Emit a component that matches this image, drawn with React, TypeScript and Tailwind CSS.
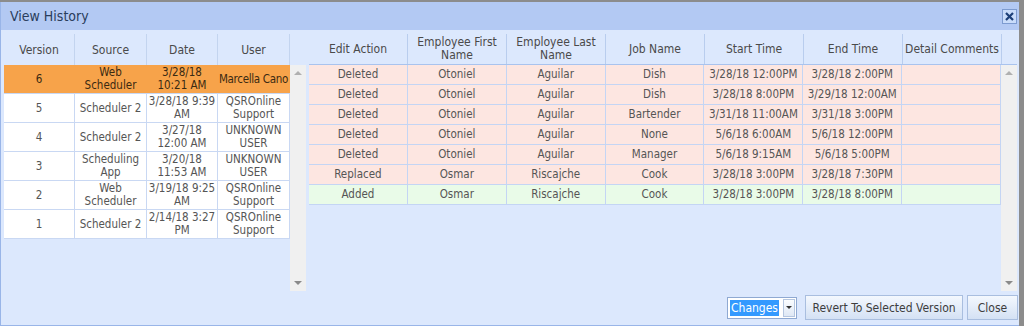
import React from "react";

type Version = {
  version: string;
  source: string;
  date: string;
  user: string;
  selected?: boolean;
};

type Change = {
  action: string;
  first: string;
  last: string;
  job: string;
  start: string;
  end: string;
  comments: string;
  added?: boolean;
};

const versions: Version[] = [
  { version: "6", source: "Web Scheduler", date: "3/28/18 10:21 AM", user: "Marcella Cano", selected: true },
  { version: "5", source: "Scheduler 2", date: "3/28/18 9:39 AM", user: "QSROnline Support" },
  { version: "4", source: "Scheduler 2", date: "3/27/18 12:00 AM", user: "UNKNOWN USER" },
  { version: "3", source: "Scheduling App", date: "3/20/18 11:53 AM", user: "UNKNOWN USER" },
  { version: "2", source: "Web Scheduler", date: "3/19/18 9:25 AM", user: "QSROnline Support" },
  { version: "1", source: "Scheduler 2", date: "2/14/18 3:27 PM", user: "QSROnline Support" },
];

const changes: Change[] = [
  { action: "Deleted", first: "Otoniel", last: "Aguilar", job: "Dish", start: "3/28/18 12:00PM", end: "3/28/18 2:00PM", comments: "" },
  { action: "Deleted", first: "Otoniel", last: "Aguilar", job: "Dish", start: "3/28/18 8:00PM", end: "3/29/18 12:00AM", comments: "" },
  { action: "Deleted", first: "Otoniel", last: "Aguilar", job: "Bartender", start: "3/31/18 11:00AM", end: "3/31/18 3:00PM", comments: "" },
  { action: "Deleted", first: "Otoniel", last: "Aguilar", job: "None", start: "5/6/18 6:00AM", end: "5/6/18 12:00PM", comments: "" },
  { action: "Deleted", first: "Otoniel", last: "Aguilar", job: "Manager", start: "5/6/18 9:15AM", end: "5/6/18 5:00PM", comments: "" },
  { action: "Replaced", first: "Osmar", last: "Riscajche", job: "Cook", start: "3/28/18 3:00PM", end: "3/28/18 7:30PM", comments: "" },
  { action: "Added", first: "Osmar", last: "Riscajche", job: "Cook", start: "3/28/18 3:00PM", end: "3/28/18 8:00PM", comments: "", added: true },
];

const leftHeaders = ["Version", "Source", "Date", "User"];
const rightHeaders = [
  "Edit Action",
  "Employee First Name",
  "Employee Last Name",
  "Job Name",
  "Start Time",
  "End Time",
  "Detail Comments",
];

const font = { fontFamily: "Tahoma, 'DejaVu Sans Condensed', 'Liberation Sans', sans-serif" };

const ScrollBar = ({ height }: { height: string }) => (
  <div className={`w-[16px] ${height} bg-[#f0f0f0] flex flex-col items-center justify-between py-[6px]`}>
    <div className="w-0 h-0 border-l-[4px] border-r-[4px] border-b-[4px] border-l-transparent border-r-transparent border-b-[#b0b0b0]" />
    <div className="w-0 h-0 border-l-[4px] border-r-[4px] border-t-[4px] border-l-transparent border-r-transparent border-t-[#8a8a8a]" />
  </div>
);

const App = () => {
  return (
    <div
      className="w-[1024px] h-[326px] bg-[#8c8c8c] pt-[2px] pr-[5px] overflow-hidden"
      style={font}
    >
      <div className="h-[324px] flex flex-col border-l border-b border-[#99b5e8] bg-[#dce8fd]">
        {/* title bar */}
        <div className="h-[28px] bg-[#b3c9f3] flex items-center justify-between pl-[9px] pr-[2px] shrink-0">
          <span className="text-[14px] text-[#2a3d5c]">View History</span>
          <div className="w-[15px] h-[15px] border border-[#7d9bd0] bg-[#c9dcfa] flex items-center justify-center">
            <svg width="9" height="9" viewBox="0 0 9 9">
              <path d="M1 1 L8 8 M8 1 L1 8" stroke="#1d3f78" strokeWidth="2.2" />
            </svg>
          </div>
        </div>

        {/* main */}
        <div className="flex pl-[3px] pt-[4px] h-[261px] text-[#555555] shrink-0">
          {/* versions */}
          <div className="w-[302px] flex flex-col">
            <div className="flex h-[31px] w-[286px]">
              {leftHeaders.map((h, i) => (
                <div
                  key={h}
                  className={`${i % 2 === 0 ? "w-[71px]" : "w-[72px]"} flex items-center justify-center border-r border-[#c3d4ef] text-[#4a4a4a] text-[12px]`}
                >
                  {h}
                </div>
              ))}
            </div>
            <div className="flex">
              <div className="w-[286px]">
                {versions.map((v) => (
                  <div
                    key={v.version}
                    className={`flex h-[29px] border-b border-[#c9d8f3] ${v.selected ? "bg-[#f7a34a] text-[#3b2a12]" : "bg-white"}`}
                  >
                    {[v.version, v.source, v.date, v.user].map((c, i) => (
                      <div
                        key={i}
                        className={`${i % 2 === 0 ? "w-[71px]" : "w-[72px]"} flex items-center justify-center text-center leading-[13px] border-r ${v.selected ? "border-[#f7a34a]" : "border-[#c9d8f3]"} text-[11.5px] ${v.selected && i === 3 ? "whitespace-nowrap tracking-[-0.3px]" : ""}`}
                      >
                        {c}
                      </div>
                    ))}
                  </div>
                ))}
              </div>
              <ScrollBar height="h-[226px]" />
            </div>
          </div>

          {/* changes */}
          <div className="flex flex-col ml-[3px]">
            <div className="flex h-[31px] border-b border-[#a9c3ee]">
              {rightHeaders.map((h) => (
                <div
                  key={h}
                  className="w-[99px] flex items-center justify-center text-center leading-[13px] border-r border-[#b9cdee] text-[#4a4a4a] text-[12px] px-[2px]"
                >
                  {h}
                </div>
              ))}
            </div>
            <div className="flex">
              <div className="w-[692px]">
                {changes.map((c, r) => (
                  <div
                    key={r}
                    className={`flex h-[20px] border-b border-[#c4d5f4] ${c.added ? "bg-[#e9fbe8]" : "bg-[#fde6e1]"}`}
                  >
                    {[c.action, c.first, c.last, c.job, c.start, c.end, c.comments].map((t, i) => (
                      <div
                        key={i}
                        className="w-[99px] flex items-center justify-center border-r border-[#c4d5f4] text-[11.5px] whitespace-nowrap"
                      >
                        {t}
                      </div>
                    ))}
                  </div>
                ))}
              </div>
              <ScrollBar height="h-[226px]" />
            </div>
          </div>
        </div>

        {/* footer */}
        <div className="flex justify-end items-center pr-[1px] pt-[4px] text-[12px] text-[#3d3d3d]">
          <div className="flex items-center h-[22px] w-[70px] border border-[#8fa9d2] bg-white pl-[2px] pr-[1px] gap-[4px]">
            <span className="bg-[#3399ff] text-white leading-[16px] px-[1px]">Changes</span>
            <div className="ml-auto w-[16px] h-[18px] border border-[#b5c6e0] bg-gradient-to-b from-[#fbfdff] to-[#dfe8f5] flex items-center justify-center">
              <div className="w-0 h-0 border-l-[3px] border-r-[3px] border-t-[3px] border-l-transparent border-r-transparent border-t-[#333333]" />
            </div>
          </div>
          <button className="ml-[8px] h-[25px] w-[158px] border border-[#a9bedf] bg-gradient-to-b from-[#f4f8fe] to-[#d4e1f4] flex items-center justify-center">
            Revert To Selected Version
          </button>
          <button className="ml-[4px] h-[25px] w-[51px] border border-[#a9bedf] bg-gradient-to-b from-[#f4f8fe] to-[#d4e1f4] flex items-center justify-center">
            Close
          </button>
        </div>
      </div>
    </div>
  );
};

export default App;
